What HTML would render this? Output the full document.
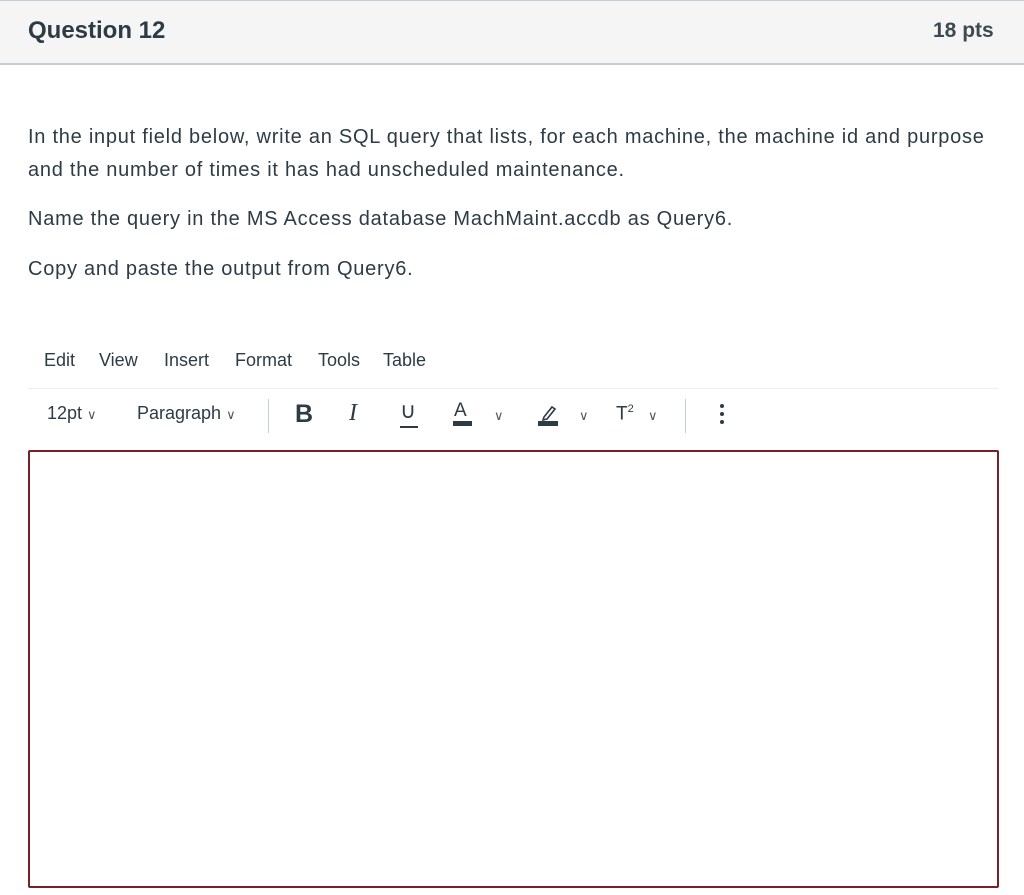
<!DOCTYPE html>
<html><head><meta charset="utf-8"><style>
body{margin:0;width:1024px;height:895px;background:#fff;font-family:"Liberation Sans",sans-serif;color:#2d3b45;position:relative;overflow:hidden}
.a{position:absolute;white-space:nowrap}
.hdr{position:absolute;left:0;top:0;width:1024px;height:65px;background:#f5f5f5;border-top:1px solid #c7cdd1;border-bottom:2px solid #c7cdd1;box-sizing:border-box}
.t{font-size:20px;letter-spacing:0.75px;color:#2d3b45}
.m{font-size:18px;color:#2d3b45}
.chev{font-size:13px;color:#555}
</style></head><body>
<div class="hdr"></div>
<div class="a" style="left:28px;top:17px;font-size:24px;font-weight:bold;color:#2d3b45">Question 12</div>
<div class="a" style="left:933px;top:19px;font-size:21px;font-weight:bold;color:#3d4a52">18 pts</div>

<div class="a t" style="left:28px;top:126px">In the input field below, write an SQL query that lists, for each machine, the machine id and purpose</div>
<div class="a t" style="left:28px;top:159px">and the number of times it has had unscheduled maintenance.</div>
<div class="a t" style="left:28px;top:208px">Name the query in the MS Access database MachMaint.accdb as Query6.</div>
<div class="a t" style="left:28px;top:258px">Copy and paste the output from Query6.</div>

<div class="a m" style="left:44px;top:350px">Edit</div>
<div class="a m" style="left:99px;top:350px">View</div>
<div class="a m" style="left:164px;top:350px">Insert</div>
<div class="a m" style="left:235px;top:350px">Format</div>
<div class="a m" style="left:318px;top:350px">Tools</div>
<div class="a m" style="left:383px;top:350px">Table</div>
<div class="a" style="left:28px;top:388px;width:970px;height:1px;background:#eceef0"></div>

<div class="a m" style="left:47px;top:403px">12pt <span class="chev">&#8744;</span></div>
<div class="a m" style="left:137px;top:403px">Paragraph <span class="chev">&#8744;</span></div>
<div class="a" style="left:268px;top:399px;width:1px;height:34px;background:#c7cdd1"></div>
<div class="a" style="left:295px;top:400px;font-size:25px;font-weight:bold;color:#2d3b45">B</div>
<div class="a" style="left:349px;top:400px;font-size:24px;font-style:italic;font-family:'Liberation Serif',serif;color:#2d3b45">I</div>
<div class="a" style="left:400px;top:398px;font-size:22px;color:#2d3b45">&#8746;</div>
<div class="a" style="left:400px;top:426px;width:18px;height:2px;background:#2d3b45"></div>
<div class="a" style="left:454px;top:400px;font-size:19px;color:#2d3b45">A</div>
<div class="a" style="left:453px;top:421px;width:19px;height:5px;background:#2d3b45"></div>
<div class="a chev" style="left:494px;top:408px">&#8744;</div>
<svg class="a" style="left:538px;top:402px" width="22" height="25"><path d="M6 15l8-10 3 2-8 10-4 1z" fill="none" stroke="#2d3b45" stroke-width="1.6"/><rect x="0" y="19" width="20" height="5" fill="#2d3b45"/></svg>
<div class="a chev" style="left:579px;top:408px">&#8744;</div>
<div class="a" style="left:616px;top:403px;font-size:19px;color:#2d3b45">T<sup style="font-size:11px">2</sup></div>
<div class="a chev" style="left:648px;top:408px">&#8744;</div>
<div class="a" style="left:685px;top:399px;width:1px;height:34px;background:#c7cdd1"></div>
<svg class="a" style="left:719px;top:403px" width="6" height="24"><circle cx="3" cy="3" r="2" fill="#2d3b45"/><circle cx="3" cy="11" r="2" fill="#2d3b45"/><circle cx="3" cy="19" r="2" fill="#2d3b45"/></svg>

<div class="a" style="left:28px;top:450px;width:971px;height:438px;border:2px solid #7a1f24;box-sizing:border-box;border-radius:2px"></div>
</body></html>
